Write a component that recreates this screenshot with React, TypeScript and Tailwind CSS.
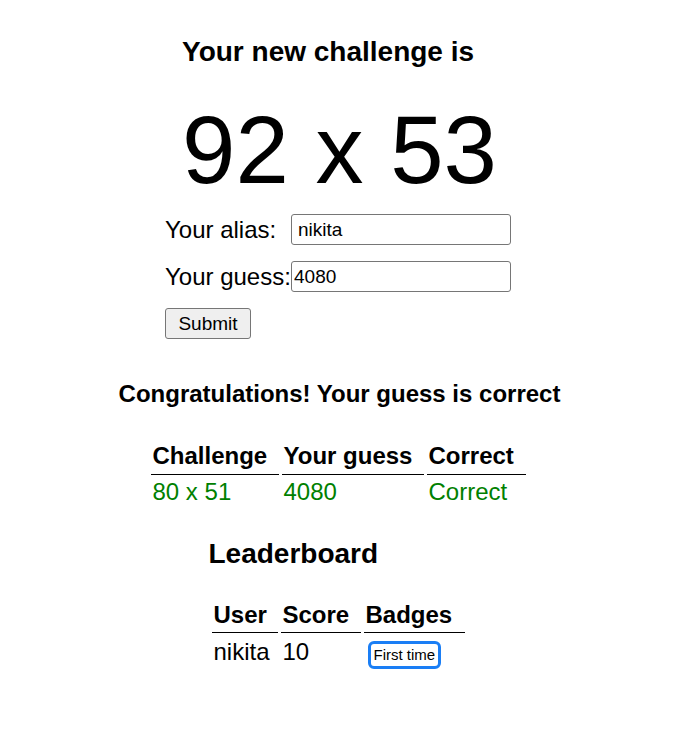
export default function App() {
  return (
    <div className="flex flex-col items-center bg-white text-black pt-[36px] pb-[60px] font-['Liberation_Sans',Arial,sans-serif]">
      <div className="flex flex-col items-start">
        <h3 className="text-[28px] leading-[32px] font-bold">Your new challenge is</h3>
        <h1 className="text-[96px] leading-[110px] mt-[27px]">92 x 53</h1>
      </div>
      <form className="flex flex-col items-start mt-[9px] mr-[3px]" onSubmit={(e) => e.preventDefault()}>
        <div className="flex items-center h-[31px]">
          <label className="w-[126px] text-[24px] leading-[31px]">Your alias:</label>
          <input
            type="text"
            defaultValue="nikita"
            className="w-[220px] h-[31px] border border-[#767676] rounded-[3px] px-[6px] text-[19px] leading-[22px] text-black"
          />
        </div>
        <div className="flex items-center h-[31px] mt-[16px]">
          <label className="w-[126px] text-[24px] leading-[31px]">Your guess:</label>
          <input
            type="text"
            defaultValue="4080"
            className="w-[220px] h-[31px] border border-[#767676] rounded-[3px] px-[2px] text-[19px] leading-[22px] text-black"
          />
        </div>
        <button
          type="submit"
          className="mt-[16px] w-[86px] h-[31px] border border-[#767676] rounded-[3px] bg-[#efefef] text-[19px] leading-[22px] text-black"
        >
          Submit
        </button>
      </form>
      <h4 className="mt-[41px] text-[24px] leading-[28px] font-bold">Congratulations! Your guess is correct</h4>
      <table className="mt-[31px] border-separate border-spacing-[3px] text-[24px] leading-[28px] mr-[3px]">
        <thead>
          <tr>
            <th className="w-[128px] text-left font-bold pl-[2px] pb-[4px] border-b border-black">Challenge</th>
            <th className="w-[142px] text-left font-bold pl-[2px] pb-[4px] border-b border-black">Your guess</th>
            <th className="w-[99px] text-left font-bold pl-[2px] pb-[4px] border-b border-black">Correct</th>
          </tr>
        </thead>
        <tbody>
          <tr className="text-[#008000]">
            <td className="pl-[2px]">80 x 51</td>
            <td className="pl-[2px]">4080</td>
            <td className="pl-[2px]">Correct</td>
          </tr>
        </tbody>
      </table>
      <div className="flex flex-col items-start mt-[29px] mr-[3px]">
        <h3 className="text-[28px] leading-[32px] font-bold">Leaderboard</h3>
        <table className="mt-[28px] border-separate border-spacing-[3px] text-[24px] leading-[28px]">
          <thead>
            <tr>
              <th className="w-[66px] text-left font-bold pl-[2px] pb-[3px] border-b border-black">User</th>
              <th className="w-[80px] text-left font-bold pl-[2px] pb-[3px] border-b border-black">Score</th>
              <th className="w-[101px] text-left font-bold pl-[2px] pb-[3px] border-b border-black">Badges</th>
            </tr>
          </thead>
          <tbody>
            <tr>
              <td className="pl-[2px] pt-[2px] align-baseline">nikita</td>
              <td className="pl-[2px] pt-[2px] align-baseline">10</td>
              <td className="pl-[2px] pt-[2px] align-baseline">
                <span className="inline-block ml-[2px] border-[3px] border-[#1a7ef5] rounded-[6px] px-[3px] py-[2px] text-[15px] leading-[18px] align-baseline">
                  First time
                </span>
              </td>
            </tr>
          </tbody>
        </table>
      </div>
    </div>
  );
}
